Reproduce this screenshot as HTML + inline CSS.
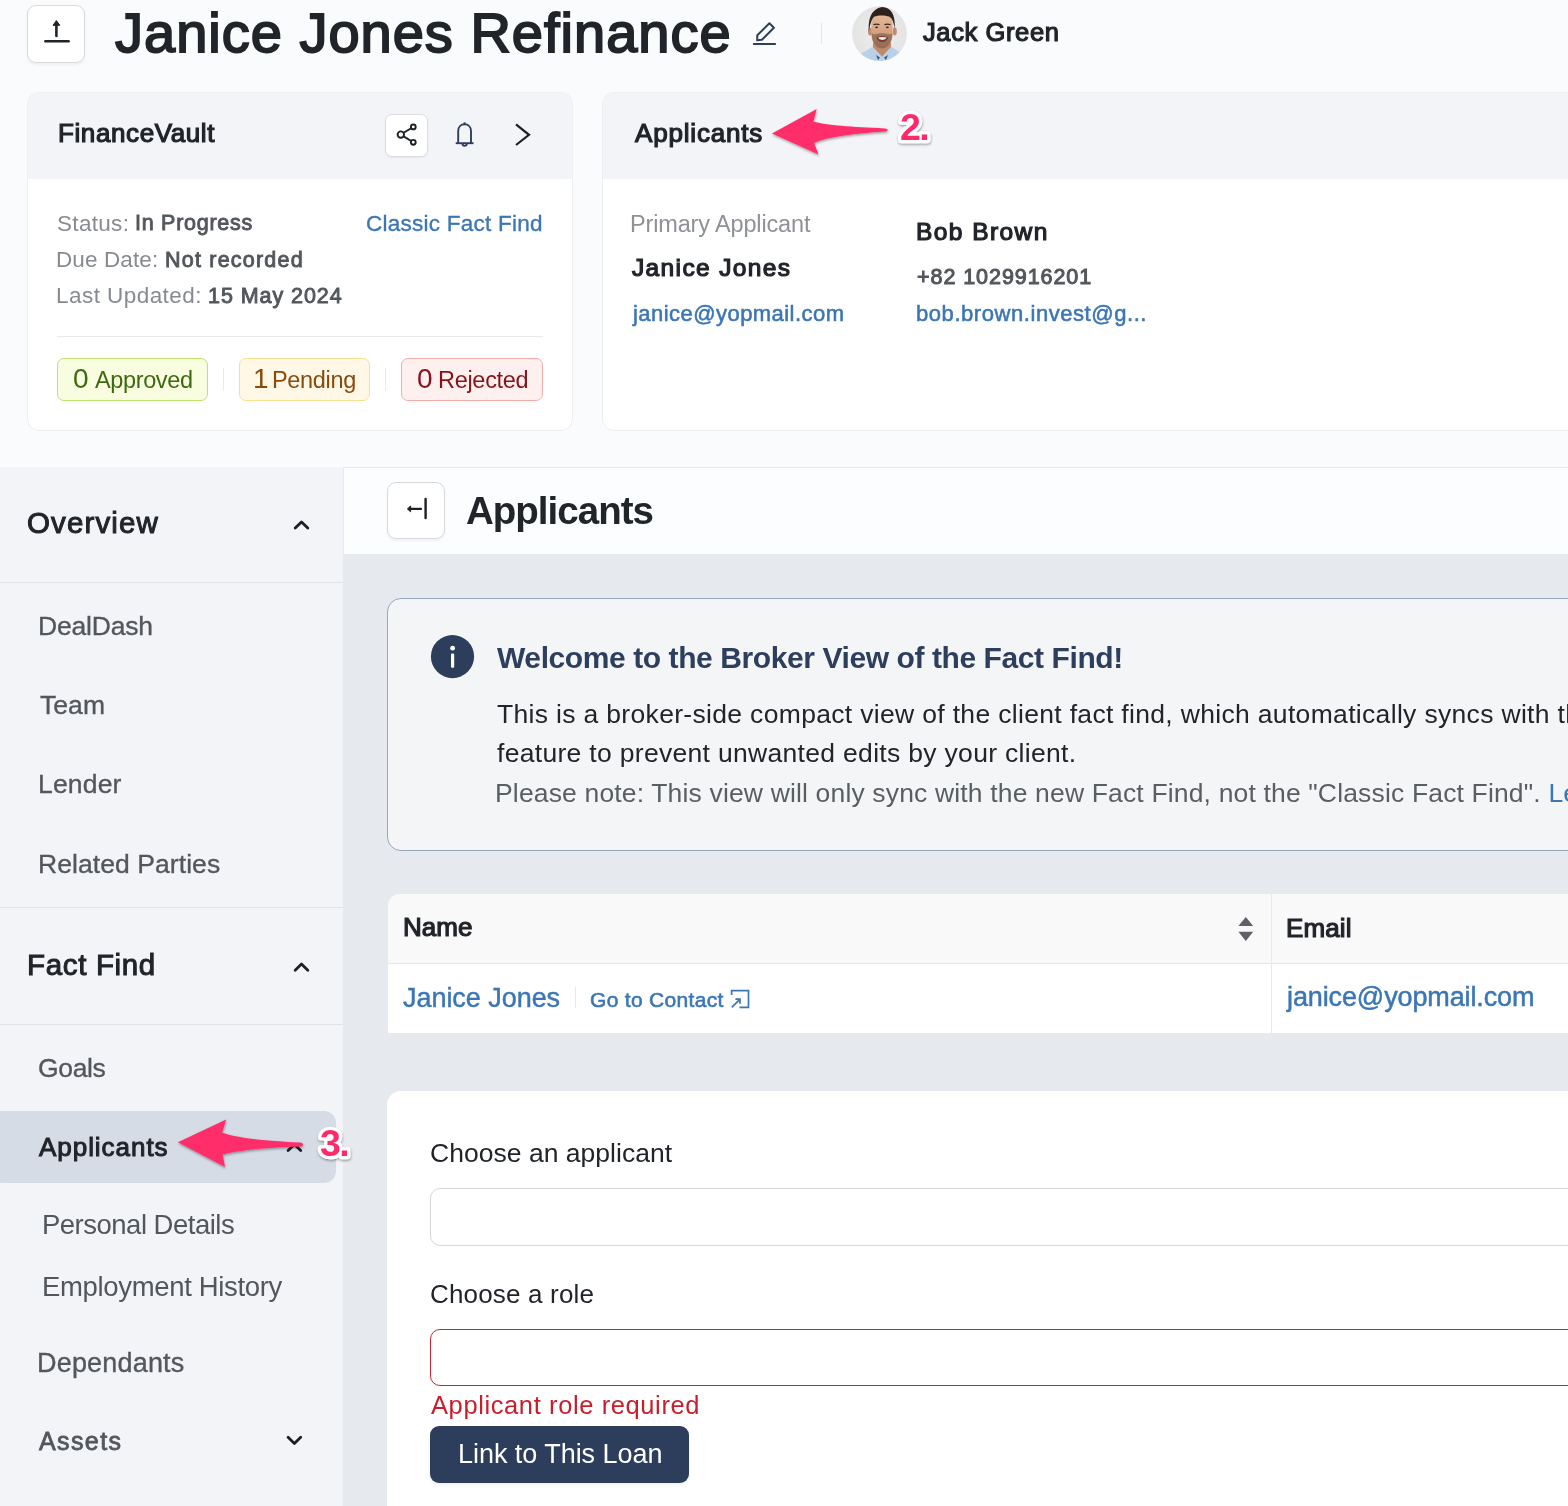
<!DOCTYPE html>
<html><head><meta charset="utf-8"><title>Applicants</title>
<style>
html,body{margin:0;padding:0}
body{width:1568px;height:1506px;overflow:hidden;position:relative;background:#fafbfc;font-family:"Liberation Sans",sans-serif}
.a{position:absolute}
.t{position:absolute;white-space:pre;will-change:transform}
.ann{font-weight:700;color:#ff2d6b;-webkit-text-stroke:5px #fff;paint-order:stroke fill;letter-spacing:-1px;text-shadow:1px 2px 2px rgba(0,0,0,.35)}
</style></head><body>
<div class="a" style="left:27px;top:5px;width:58px;height:58px;box-sizing:border-box;background:#fff;border:1px solid #d9dadd;border-radius:9px;box-shadow:0 2px 3px rgba(0,0,0,.05)"></div>
<svg class="a" style="left:27px;top:5px" width="58" height="57" viewBox="27 5 58 57">
<path d="M56.4 36 V24" fill="none" stroke="#212429" stroke-width="2.6" stroke-linecap="round"/><path d="M53 25.3 L56.4 20.6 L59.8 25.3 Z" fill="#212429" stroke="#212429" stroke-width="1" stroke-linejoin="round"/>
<path d="M45.4 41.3 H68.6" stroke="#212429" stroke-width="2.6" stroke-linecap="round"/></svg>
<div class="t" style="left:115.0px;top:4.8px;font-size:56.0px;line-height:56.0px;font-weight:400;letter-spacing:1.0px;color:#212429;-webkit-text-stroke:1.9px #212429;">Janice Jones Refinance</div>
<svg class="a" style="left:745px;top:15px" width="40" height="35" viewBox="745 15 40 35">
<path d="M757.3 35.3 L769.4 23.3 L773.9 27.8 L761.9 39.7 L757.2 40.3 Z" fill="none" stroke="#2e3e5d" stroke-width="2" stroke-linejoin="round"/>
<path d="M753.8 44.1 H775.1" stroke="#2e3e5d" stroke-width="2" stroke-linecap="round"/></svg>
<div class="a" style="left:821px;top:23px;width:1px;height:21px;background:#e6e7ea"></div>
<svg class="a" style="left:851px;top:5px" width="58" height="58" viewBox="851 5 58 58">
<defs><radialGradient id="avbg" cx="0.5" cy="0.5" r="0.55"><stop offset="0" stop-color="#eeeeed"/><stop offset="1" stop-color="#e2e3e2"/></radialGradient>
<linearGradient id="skin" x1="0" y1="0" x2="0" y2="1"><stop offset="0" stop-color="#e6b999"/><stop offset="1" stop-color="#c48d6c"/></linearGradient>
<clipPath id="avc"><circle cx="879.5" cy="33.6" r="27.4"/></clipPath></defs>
<circle cx="879.5" cy="33.6" r="27.4" fill="url(#avbg)"/>
<g clip-path="url(#avc)">
<path d="M855 62 L859 55 C864 52 869 49 873 46.5 L882 56 L891 46.5 C895 49 899 51.5 902 54 L905 62 Z" fill="#b9d1e8"/>
<path d="M873 43 L891 43 L891 47 L882 56.5 L873 47 Z" fill="#c08865"/>
<path d="M876 55 L880 57.5 L878 60 Z M888 55 L884 57.5 L886 60 Z" fill="#3a5a8c"/>
<ellipse cx="870" cy="31.5" rx="2" ry="4" fill="#c38b69"/>
<ellipse cx="894.8" cy="31.5" rx="2" ry="4" fill="#c38b69"/>
<path d="M871.3 24 C871.3 17 876 14.5 882 14.5 C888 14.5 892.6 17 892.6 24 L892.6 33 C892.6 43 888 48.3 882 48.3 C876 48.3 871.3 43 871.3 33 Z" fill="url(#skin)"/>
<path d="M871.5 33 C872 43 876.5 48.4 882 48.4 C887.5 48.4 892 43 892.4 33 C890 35 888.5 34 886 33.5 C883.5 33 880.5 33 878 33.5 C875.5 34 874 35 871.5 33 Z" fill="#6f5444" opacity=".55"/>
<path d="M868.8 31 C868 19 871 9 882 7 C891 7.5 895.5 14 894.8 29 C893.8 24 893 18.5 889 16.5 C885 15 878 15 874.5 16.5 C871.5 18.5 870.5 24 868.8 31 Z" fill="#2e221c"/>
<path d="M873.5 24.6 Q876.5 23.6 879.5 24.6 M884.5 24.6 Q887.5 23.6 890.5 24.6" fill="none" stroke="#3a2a22" stroke-width="1.2"/>
<ellipse cx="876.6" cy="27.3" rx="1.5" ry=".9" fill="#3d2c25"/><ellipse cx="887.4" cy="27.3" rx="1.5" ry=".9" fill="#3d2c25"/>
<path d="M876.5 37.2 Q882.3 35 888.3 37.2 Q887 42 882.3 42 Q877.5 42 876.5 37.2 Z" fill="#7d3a34"/>
<path d="M878 37.6 Q882.3 36.4 886.8 37.6 Q885.6 40 882.3 40 Q879 40 878 37.6 Z" fill="#f2eee9"/>
</g></svg>
<div class="t" style="left:923.2px;top:20.0px;font-size:25.5px;line-height:25.5px;font-weight:400;letter-spacing:0.611px;color:#212429;-webkit-text-stroke:1.2px #212429;">Jack Green</div>
<div class="a" style="left:27px;top:92px;width:546px;height:339px;box-sizing:border-box;background:#fff;border:1px solid #eceef1;border-radius:12px;overflow:hidden"></div>
<div class="a" style="left:28px;top:93px;width:544px;height:86px;background:#f3f4f7;border-radius:11px 11px 0 0"></div>
<div class="t" style="left:58.4px;top:120.4px;font-size:26.0px;line-height:26.0px;font-weight:400;letter-spacing:0.6px;color:#212429;-webkit-text-stroke:1.2px #212429;">FinanceVault</div>
<div class="a" style="left:385px;top:114px;width:43px;height:43px;box-sizing:border-box;background:#fff;border:1px solid #dcdde0;border-radius:7px;box-shadow:0 1px 2px rgba(0,0,0,.05)"></div>
<svg class="a" style="left:386px;top:114px" width="42" height="42" viewBox="386 114 42 42">
<g fill="none" stroke="#1c1f24" stroke-width="1.9">
<circle cx="400.8" cy="134.6" r="3.2"/><circle cx="413.3" cy="126.9" r="2.4"/><circle cx="413.3" cy="142.3" r="2.4"/>
<path d="M403.6 132.8 L411.2 128.2 M403.6 136.4 L411.2 141"/></g></svg>
<svg class="a" style="left:450px;top:118px" width="30" height="34" viewBox="450 118 30 34">
<g fill="none" stroke="#2e3e5d" stroke-width="1.9" stroke-linejoin="round">
<path d="M458.2 143 V131 C458.2 126.8 461 124.3 464.6 124.3 C468.2 124.3 471 126.8 471 131 V143"/>
<path d="M455.7 143.2 H473.5"/>
<path d="M462.4 143.5 C462.4 146.6 466.8 146.6 466.8 143.5"/>
<path d="M464.6 122.3 V124.3"/></g></svg>
<svg class="a" style="left:510px;top:118px" width="26" height="32" viewBox="510 118 26 32">
<path d="M516 124.3 L529 134.8 L516 145" fill="none" stroke="#1c1f24" stroke-width="2.2"/></svg>
<div class="t" style="left:57.4px;top:212.8px;font-size:22.5px;line-height:22.5px;font-weight:400;letter-spacing:0.317px;color:#878a8f;">Status:</div>
<div class="t" style="left:135.3px;top:213.4px;font-size:21.5px;line-height:21.5px;font-weight:400;letter-spacing:0.73px;color:#53575c;-webkit-text-stroke:0.9px #53575c;">In Progress</div>
<div class="t" style="left:56.4px;top:249.0px;font-size:22.5px;line-height:22.5px;font-weight:400;letter-spacing:0.113px;color:#878a8f;">Due Date:</div>
<div class="t" style="left:164.9px;top:249.6px;font-size:21.5px;line-height:21.5px;font-weight:400;letter-spacing:1.209px;color:#53575c;-webkit-text-stroke:0.9px #53575c;">Not recorded</div>
<div class="t" style="left:56.4px;top:285.0px;font-size:22.5px;line-height:22.5px;font-weight:400;letter-spacing:0.45px;color:#878a8f;">Last Updated:</div>
<div class="t" style="left:207.6px;top:285.6px;font-size:21.5px;line-height:21.5px;font-weight:400;letter-spacing:0.94px;color:#53575c;-webkit-text-stroke:0.9px #53575c;">15 May 2024</div>
<div class="t" style="left:366.4px;top:212.6px;font-size:22.5px;line-height:22.5px;font-weight:400;letter-spacing:0.256px;color:#3b76b5;-webkit-text-stroke:0.35px #3b76b5;">Classic Fact Find</div>
<div class="a" style="left:57px;top:336px;width:486px;height:1px;background:#e8e9ec"></div>
<div class="a" style="left:57px;top:358px;width:151px;height:43px;box-sizing:border-box;background:#f8fde0;border:1px solid #bde46a;border-radius:7px"></div>
<div class="a" style="left:223px;top:368px;width:1px;height:23px;background:#e9eaed"></div>
<div class="a" style="left:239px;top:358px;width:131px;height:43px;box-sizing:border-box;background:#fff8e6;border:1px solid #fbdf8f;border-radius:7px"></div>
<div class="a" style="left:385px;top:368px;width:1px;height:23px;background:#e9eaed"></div>
<div class="a" style="left:401px;top:358px;width:142px;height:43px;box-sizing:border-box;background:#fff0f0;border:1px solid #f6abab;border-radius:7px"></div>
<div class="t" style="left:72.6px;top:365.3px;font-size:28.0px;line-height:28.0px;font-weight:400;letter-spacing:0px;color:#3d6a0f;">0</div>
<div class="t" style="left:95.0px;top:369.0px;font-size:23.5px;line-height:23.5px;font-weight:400;letter-spacing:-0.371px;color:#3d6a0f;">Approved</div>
<div class="t" style="left:253.3px;top:365.3px;font-size:28.0px;line-height:28.0px;font-weight:400;letter-spacing:0px;color:#8a4a0c;">1</div>
<div class="t" style="left:271.6px;top:369.0px;font-size:23.5px;line-height:23.5px;font-weight:400;letter-spacing:-0.333px;color:#8a4a0c;">Pending</div>
<div class="t" style="left:416.7px;top:365.3px;font-size:28.0px;line-height:28.0px;font-weight:400;letter-spacing:0px;color:#87131a;">0</div>
<div class="t" style="left:437.8px;top:369.0px;font-size:23.5px;line-height:23.5px;font-weight:400;letter-spacing:-0.3px;color:#87131a;">Rejected</div>
<div class="a" style="left:602px;top:92px;width:1100px;height:339px;box-sizing:border-box;background:#fff;border:1px solid #eceef1;border-radius:12px;overflow:hidden"></div>
<div class="a" style="left:603px;top:93px;width:1000px;height:86px;background:#f3f4f7;border-radius:11px 0 0 0"></div>
<div class="t" style="left:634.6px;top:120.1px;font-size:26.0px;line-height:26.0px;font-weight:400;letter-spacing:0.822px;color:#212429;-webkit-text-stroke:1.2px #212429;">Applicants</div>
<div class="t" style="left:630.4px;top:212.7px;font-size:23.5px;line-height:23.5px;font-weight:400;letter-spacing:-0.15px;color:#8e9196;">Primary Applicant</div>
<div class="t" style="left:632.4px;top:255.8px;font-size:24.5px;line-height:24.5px;font-weight:400;letter-spacing:1.373px;color:#212429;-webkit-text-stroke:1.2px #212429;">Janice Jones</div>
<div class="t" style="left:633.4px;top:302.9px;font-size:22.0px;line-height:22.0px;font-weight:400;letter-spacing:0.453px;color:#3b76b5;-webkit-text-stroke:0.55px #3b76b5;">janice@yopmail.com</div>
<div class="t" style="left:915.8px;top:220.0px;font-size:24.5px;line-height:24.5px;font-weight:400;letter-spacing:1.438px;color:#212429;-webkit-text-stroke:1.2px #212429;">Bob Brown</div>
<div class="t" style="left:916.8px;top:266.9px;font-size:21.5px;line-height:21.5px;font-weight:400;letter-spacing:0.938px;color:#53575c;-webkit-text-stroke:1.0px #53575c;">+82 1029916201</div>
<div class="t" style="left:915.8px;top:302.9px;font-size:22.0px;line-height:22.0px;font-weight:400;letter-spacing:0.56px;color:#3b76b5;-webkit-text-stroke:0.55px #3b76b5;">bob.brown.invest@g...</div>
<div class="a" style="left:0px;top:467px;width:343px;height:1039px;background:#f3f4f8"></div>
<div class="a" style="left:0px;top:582px;width:343px;height:1px;background:#e1e3e7"></div>
<div class="a" style="left:0px;top:907px;width:343px;height:1px;background:#e1e3e7"></div>
<div class="a" style="left:0px;top:1024px;width:343px;height:1px;background:#e1e3e7"></div>
<div class="a" style="left:-10px;top:1111px;width:346px;height:72px;background:#d5dce6;border-radius:12px"></div>
<svg class="a" style="left:270px;top:516px" width="50" height="24" viewBox="270 516 50 24"><path d="M295.2 528.1 L301.5 521.9 L307.8 528.1" fill="none" stroke="#1c1f24" stroke-width="2.8" stroke-linecap="round" stroke-linejoin="round"/></svg>
<svg class="a" style="left:270px;top:958px" width="50" height="24" viewBox="270 958 50 24"><path d="M295.2 970.2 L301.5 964 L307.8 970.2" fill="none" stroke="#1c1f24" stroke-width="2.8" stroke-linecap="round" stroke-linejoin="round"/></svg>
<svg class="a" style="left:270px;top:1138px" width="50" height="24" viewBox="270 1138 50 24"><path d="M288.1 1150.6 L294.4 1144.4 L300.7 1150.6" fill="none" stroke="#1c1f24" stroke-width="2.8" stroke-linecap="round" stroke-linejoin="round"/></svg>
<svg class="a" style="left:270px;top:1425px" width="50" height="24" viewBox="270 1425 50 24"><path d="M288.1 1437.2 L294.4 1443.4 L300.7 1437.2" fill="none" stroke="#1c1f24" stroke-width="2.8" stroke-linecap="round" stroke-linejoin="round"/></svg>
<div class="t" style="left:27.3px;top:508.4px;font-size:29.5px;line-height:29.5px;font-weight:400;letter-spacing:1.129px;color:#212429;-webkit-text-stroke:1.0px #212429;">Overview</div>
<div class="t" style="left:37.8px;top:612.5px;font-size:26.5px;line-height:26.5px;font-weight:400;letter-spacing:-0.186px;color:#53575c;-webkit-text-stroke:0.35px #53575c;">DealDash</div>
<div class="t" style="left:39.8px;top:691.8px;font-size:26.5px;line-height:26.5px;font-weight:400;letter-spacing:0.067px;color:#53575c;-webkit-text-stroke:0.35px #53575c;">Team</div>
<div class="t" style="left:37.8px;top:771.0px;font-size:26.5px;line-height:26.5px;font-weight:400;letter-spacing:0.18px;color:#53575c;-webkit-text-stroke:0.35px #53575c;">Lender</div>
<div class="t" style="left:37.8px;top:850.7px;font-size:26.5px;line-height:26.5px;font-weight:400;letter-spacing:0.071px;color:#53575c;-webkit-text-stroke:0.35px #53575c;">Related Parties</div>
<div class="t" style="left:26.7px;top:950.4px;font-size:29.5px;line-height:29.5px;font-weight:400;letter-spacing:0.662px;color:#212429;-webkit-text-stroke:1.0px #212429;">Fact Find</div>
<div class="t" style="left:38.0px;top:1054.7px;font-size:26.5px;line-height:26.5px;font-weight:400;letter-spacing:-0.35px;color:#53575c;-webkit-text-stroke:0.35px #53575c;">Goals</div>
<div class="t" style="left:39.0px;top:1133.6px;font-size:26.0px;line-height:26.0px;font-weight:400;letter-spacing:0.956px;color:#212429;-webkit-text-stroke:1.0px #212429;">Applicants</div>
<div class="t" style="left:41.6px;top:1211.1px;font-size:27.5px;line-height:27.5px;font-weight:400;letter-spacing:-0.507px;color:#53575c;">Personal Details</div>
<div class="t" style="left:41.6px;top:1272.6px;font-size:27.5px;line-height:27.5px;font-weight:400;letter-spacing:-0.335px;color:#53575c;">Employment History</div>
<div class="t" style="left:37.0px;top:1350.3px;font-size:27.0px;line-height:27.0px;font-weight:400;letter-spacing:0.189px;color:#53575c;-webkit-text-stroke:0.35px #53575c;">Dependants</div>
<div class="t" style="left:39.0px;top:1429.2px;font-size:25.0px;line-height:25.0px;font-weight:400;letter-spacing:1.4px;color:#53575c;-webkit-text-stroke:0.8px #53575c;">Assets</div>
<div class="a" style="left:343px;top:554px;width:1225px;height:952px;background:#e6e9ee"></div>
<div class="a" style="left:343px;top:467px;width:1225px;height:87px;box-sizing:border-box;background:#fcfdfe;border-top:1px solid #e9eaed;border-left:1px solid #e9eaed"></div>
<div class="a" style="left:387px;top:482px;width:58px;height:57px;box-sizing:border-box;background:#fff;border:1px solid #d9dadd;border-radius:9px;box-shadow:0 2px 3px rgba(0,0,0,.05)"></div>
<svg class="a" style="left:387px;top:482px" width="58" height="57" viewBox="387 482 58 57">
<path d="M421 508.9 H410" fill="none" stroke="#1c1f24" stroke-width="2.2" stroke-linecap="round"/><path d="M410.6 506 L407.4 508.9 L410.6 511.8 Z" fill="#1c1f24" stroke="#1c1f24" stroke-width="1" stroke-linejoin="round"/>
<path d="M425.6 499 V518" stroke="#1c1f24" stroke-width="2.4" stroke-linecap="round"/></svg>
<div class="t" style="left:466.3px;top:492.0px;font-size:38.5px;line-height:38.5px;font-weight:700;letter-spacing:-0.989px;color:#212429;">Applicants</div>
<div class="a" style="left:387px;top:598px;width:1300px;height:253px;box-sizing:border-box;background:#f4f5f7;border:1px solid #98a6be;border-radius:14px"></div>
<svg class="a" style="left:428px;top:632px" width="50" height="50" viewBox="428 632 50 50">
<circle cx="452.5" cy="656.6" r="21.6" fill="#2d3d5c"/>
<circle cx="452.6" cy="648.2" r="2.4" fill="#fff"/>
<rect x="451" y="653.4" width="3.2" height="14.4" rx="1" fill="#fff"/></svg>
<div class="t" style="left:497.0px;top:642.8px;font-size:30.0px;line-height:30.0px;font-weight:700;letter-spacing:-0.414px;color:#2e3e5d;">Welcome to the Broker View of the Fact Find!</div>
<div class="t" style="left:497.3px;top:700.7px;font-size:26.5px;line-height:26.5px;font-weight:400;letter-spacing:0.325px;color:#212429;">This is a broker-side compact view of the client fact find, which automatically syncs with the client</div>
<div class="t" style="left:497.3px;top:739.8px;font-size:26.5px;line-height:26.5px;font-weight:400;letter-spacing:0.31px;color:#212429;">feature to prevent unwanted edits by your client.</div>
<div class="t" style="left:495.3px;top:779.8px;font-size:26.5px;line-height:26.5px;font-weight:400;letter-spacing:0.158px;color:#5a5e63;">Please note: This view will only sync with the new Fact Find, not the "Classic Fact Find". <span style="color:#3b76b5">Learn more</span></div>
<div class="a" style="left:388px;top:894px;width:1300px;height:139px;background:#fff;border-radius:12px 0 0 0;overflow:hidden"></div>
<div class="a" style="left:388px;top:894px;width:1300px;height:69px;background:#f9f9fa;border-radius:12px 0 0 0"></div>
<div class="a" style="left:388px;top:963px;width:1300px;height:1px;background:#e5e6e9"></div>
<div class="a" style="left:1271px;top:894px;width:1px;height:139px;background:#e9eaec"></div>
<svg class="a" style="left:1234px;top:913px" width="24" height="32" viewBox="1234 913 24 32">
<path d="M1238.4 926 L1245.8 917 L1253.2 926 Z M1238.4 931.8 L1253.2 931.8 L1245.8 941 Z" fill="#5e6166"/></svg>
<div class="a" style="left:575px;top:987px;width:1px;height:21px;background:#e6e7ea"></div>
<svg class="a" style="left:728px;top:987px" width="24" height="24" viewBox="728 987 24 24">
<g fill="none" stroke="#3b76b5" stroke-width="1.7">
<path d="M731.6 995 V990.6 H748.5 V1007.4 H739.5"/>
<path d="M731.8 1007.4 L739.6 999.6 M735.4 999.2 H740 V1003.8"/></g></svg>
<div class="t" style="left:402.8px;top:914.4px;font-size:26.0px;line-height:26.0px;font-weight:400;letter-spacing:0.067px;color:#212429;-webkit-text-stroke:1.2px #212429;">Name</div>
<div class="t" style="left:1286.0px;top:914.7px;font-size:26.0px;line-height:26.0px;font-weight:400;letter-spacing:0.125px;color:#212429;-webkit-text-stroke:1.2px #212429;">Email</div>
<div class="t" style="left:403.2px;top:985.0px;font-size:27.0px;line-height:27.0px;font-weight:400;letter-spacing:-0.045px;color:#3b76b5;-webkit-text-stroke:0.45px #3b76b5;">Janice Jones</div>
<div class="t" style="left:590.2px;top:988.6px;font-size:21.0px;line-height:21.0px;font-weight:400;letter-spacing:0.317px;color:#3b76b5;-webkit-text-stroke:0.6px #3b76b5;">Go to Contact</div>
<div class="t" style="left:1287.0px;top:984.2px;font-size:27.0px;line-height:27.0px;font-weight:400;letter-spacing:-0.118px;color:#3b76b5;-webkit-text-stroke:0.5px #3b76b5;">janice@yopmail.com</div>
<div class="a" style="left:387px;top:1091px;width:1300px;height:500px;background:#fff;border-radius:14px 0 0 0"></div>
<div class="a" style="left:430px;top:1188px;width:1300px;height:58px;box-sizing:border-box;background:#fff;border:1px solid #d6d7da;border-radius:10px"></div>
<div class="a" style="left:430px;top:1329px;width:1300px;height:57px;box-sizing:border-box;background:#fff;border:1px solid #d3202d;border-radius:10px"></div>
<div class="a" style="left:430px;top:1426px;width:259px;height:57px;background:#2d3d5c;border-radius:9px;box-shadow:0 2px 3px rgba(0,0,0,.06)"></div>
<div class="t" style="left:430.4px;top:1140.0px;font-size:26.5px;line-height:26.5px;font-weight:400;letter-spacing:0.028px;color:#212429;">Choose an applicant</div>
<div class="t" style="left:430.4px;top:1280.5px;font-size:26.0px;line-height:26.0px;font-weight:400;letter-spacing:0.175px;color:#212429;">Choose a role</div>
<div class="t" style="left:431.4px;top:1392.8px;font-size:25.5px;line-height:25.5px;font-weight:400;letter-spacing:0.605px;color:#c81e2c;">Applicant role required</div>
<div class="t" style="left:457.8px;top:1440.6px;font-size:27.0px;line-height:27.0px;font-weight:400;letter-spacing:-0.044px;color:#ffffff;">Link to This Loan</div>
<svg class="a" style="left:0;top:0" width="1568" height="1506" viewBox="0 0 1568 1506">
<defs><filter id="sh" x="-20%" y="-40%" width="140%" height="180%"><feDropShadow dx="0.4" dy="1.4" stdDeviation="1.1" flood-color="#000" flood-opacity="0.38"/></filter></defs>
<path d="M772 133.5 L816.7 108.9 L813.4 121.6 C826 125.5 852 127 884.6 128.4 C888.8 128.8 888.8 131.2 884.6 131.5 C855 133.5 830 136.5 814 142.7 L818.5 154.6 Z" fill="#ff2d6b" filter="url(#sh)"/>
<path d="M177.9 1142.3 L226.1 1119.4 L222.2 1132.8 C238 1138 265 1141 300 1142.6 C304 1142.9 304 1146.4 300 1146.6 C270 1147.5 240 1150 222.6 1154.4 L225 1167.1 Z" fill="#ff2d6b" filter="url(#sh)"/>
<g font-family="Liberation Sans" font-weight="700" font-size="37.5" fill="#ff2b6b" stroke="#fff" stroke-width="6.5" stroke-linejoin="round" paint-order="stroke" filter="url(#sh)">
<text x="900" y="139.9" letter-spacing="-1.5">2.</text>
<text x="320" y="1155.9" letter-spacing="-1.5">3.</text>
</g>
</svg>
</body></html>
